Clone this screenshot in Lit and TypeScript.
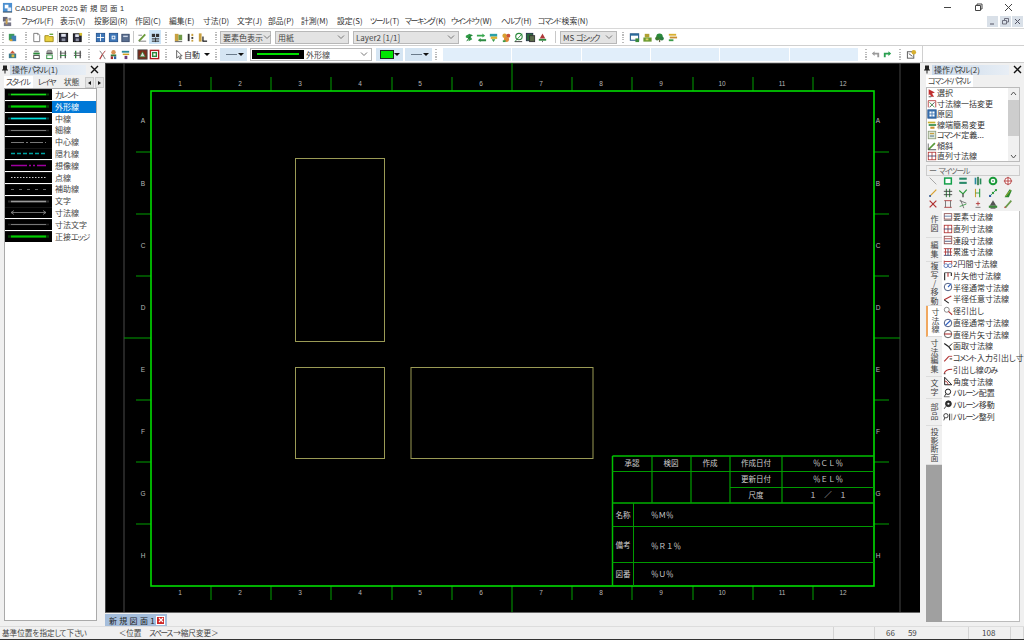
import { LitElement, html, css, svg, nothing } from "lit";
import { customElement } from "lit/decorators.js";

const L = (a: number, b: number, c: number, d: number, col = "#333", w = 1) =>
  svg`<line x1=${a} y1=${b} x2=${c} y2=${d} stroke=${col} stroke-width=${w} />`;
const R = (x: number, y: number, w: number, h: number, f = "none", s = "none", sw = 1) =>
  svg`<rect x=${x} y=${y} width=${w} height=${h} fill=${f} stroke=${s} stroke-width=${sw} />`;
const C = (x: number, y: number, r: number, f = "none", s = "none", sw = 1) =>
  svg`<circle cx=${x} cy=${y} r=${r} fill=${f} stroke=${s} stroke-width=${sw} />`;
const P = (d: string, f = "none", s = "none", sw = 1) =>
  svg`<path d=${d} fill=${f} stroke=${s} stroke-width=${sw} />`;

const K = (s: string) =>
  s.split(/([ぁ-んァ-ヶー]+)/).map((p, i) => (i % 2 ? html`<span class="k">${p}</span>` : p));

const RED = "#b03030", NAVY = "#30406a", GRN = "#2a9a3a", BLK = "#222";

const I: Record<string, unknown[]> = {
  logo: [R(1, 1, 10, 10, "#4b8fd0"), R(3, 3, 4, 4, "#fff"), R(6, 6, 4, 4, "#e8eef8"), L(1, 11, 11, 11, "#345")],
  menu: [R(1, 1, 5, 5, "#667"), R(7, 2, 3, 3, "#99a"), R(2, 7, 8, 4, "#778"), R(4, 3, 2, 6, "#c8a050")],
  book: [R(2, 2, 6, 7, "#3f9a5c"), R(5, 4, 5, 6, "#3f7fb5"), R(3, 8, 3, 2, "#d8a030")],
  new: [P("M3 1.5H7.5L9.5 3.5V10.5H3Z", "#fff", "#777"), L(7.5, 1.5, 7.5, 3.5, "#777")],
  open: [P("M1 4H5L6 5H10V10.5H1Z", "#e8d040", "#a08a18"), L(6, 2.5, 10, 2.5, "#5aa030", 1.4)],
  save: [R(1.5, 1.5, 9, 9, "#2a2a3c", "#111"), R(3.5, 2, 5, 3.2, "#dfe3ee"), R(4, 7, 4, 3, "#8a8fa0")],
  saveas: [R(1.5, 2, 8.5, 8.5, "#2a2a3c", "#111"), R(3.5, 2.5, 4, 3, "#dfe3ee"), R(4, 7, 3.5, 3, "#8a8fa0"), R(8, 1, 3, 3, "#d8c030")],
  win1: [R(1.5, 1.5, 9, 9, "#3d76b8", "#28558f"), L(2, 6, 10, 6, "#fff"), L(6, 2, 6, 10, "#fff")],
  win2: [R(1.5, 1.5, 9, 9, "#3d76b8", "#28558f"), R(4, 4, 4, 4, "#fff"), R(5, 5, 2, 2, "#3d76b8")],
  win3: [R(2, 2.5, 8, 8, "#5a6f90", "#3a4c6c"), R(3.5, 4, 5, 1.5, "#cdd6e6")],
  pen: [L(2, 10, 9, 2.5, "#6a9a3a", 2), R(1.5, 3, 4, 1, "#888"), R(2, 9.5, 8, 1, "#777")],
  grid: [R(2, 2, 3.5, 3.5, "#333"), R(6.5, 2, 3.5, 3.5, "#333"), L(2, 7.5, 10, 7.5, "#333", 1.2), L(2, 10, 10, 10, "#333", 1.2), L(6, 6, 6, 11, "#333")],
  dual: [R(2, 2, 4, 8, "#c8a040"), R(6, 3, 4, 6, "#6e9a48"), L(2, 10.5, 10, 10.5, "#555")],
  dots: [R(3, 2, 2, 8, "#333"), R(7, 2, 2, 2.5, "#c8a040"), R(7, 5.5, 2, 2, "#333"), R(7, 8.5, 2, 2, "#c8a040")],
  lshape: [R(2, 1.5, 3, 9, "#c8a040"), L(6, 10, 11, 10, BLK, 1.4), L(6.5, 5, 6.5, 10, BLK, 1.4)],
  g1: [P("M2 4L6 2L10 4L7 5L9 8L5 10V7L2 6Z", "#2e9a45"), L(3, 10, 8, 3, "#196b2c")],
  g2: [P("M1 3H7V1.5L10 4L7 6V5H1Z", "#3aa850"), P("M11 8H5V6.5L2 9L5 11V10H11Z", "#2d8a42")],
  g3: [R(2, 2, 8, 3, "#2aa0a8"), R(3, 5, 7, 2.5, "#d8b030"), P("M4 8H8L6 11Z", "#3a9a48")],
  g4: [C(4, 4, 2.5, "#d8a030"), C(8, 4, 2.2, "#c8503a"), C(6, 8, 2.8, "#e08838"), R(2, 9, 3, 2, "#3a9a48")],
  g5: [C(6.5, 5, 3.5, "#fff", "#2a8a3a", 1.2), L(2, 10.5, 10, 2, "#2a8a3a"), L(2, 10.5, 10, 10.5, "#333")],
  g6: [R(1.5, 1.5, 7, 8, "#2a6a3a", "#234"), R(5, 4, 5.5, 6.5, "#5a6a48", "#333")],
  g7: [P("M6 1.5L9 7H3Z", "#b03838"), R(2, 7.5, 8, 2, "#2a8a3a"), L(6, 9.5, 6, 11, "#555")],
  g8: [R(1.5, 2, 9, 7, "#fff", "#2a5a8a", 1.2), R(1.5, 2, 9, 2, "#2a6a9a"), R(7, 7, 4, 4, "#3a8a3a")],
  g9: [R(3, 2, 5, 4, "#b0a030"), R(1.5, 6, 9, 4.5, "#6a9a30"), R(4, 7, 3, 2, "#d8d060")],
  g10: [C(6, 5, 3.5, "#2a8a3a"), C(3.5, 7, 2.2, "#3a7a30"), C(8.5, 7, 2.2, "#2a7a40"), R(5.4, 8, 1.4, 3, "#664")],
  g11: [R(2, 2, 8, 2, "#d8b030"), R(3, 5, 8, 2, "#c89030"), R(2, 8, 5, 2, "#3a9a48")],
  cube: [R(2, 5, 8, 5, "#3a7a8c"), P("M3 5L6 1.5L9 5Z", "#c85a3a"), R(5, 6, 3, 3, "#d8c040")],
  vb1: [P("M3 3.5L4 1.5H8L9 3.5Z", "#888"), R(2.5, 4, 7, 2, "#2a8a3a"), R(3, 7, 6, 3.5, "#fff", "#444")],
  vb2: [P("M3 3.5L4 1.5H8L9 3.5Z", "#bbb", "#555", 0.6), R(2.5, 4, 7, 1.5, "#555"), R(3, 6.5, 6, 4, "#fff", "#2a8a3a")],
  vb3: [L(3, 2, 3, 10, "#555", 1.4), L(8, 2, 8, 10, "#555", 1.4), L(2, 4.5, 9, 4.5, "#555"), L(2, 7, 9, 7, "#2a8a3a")],
  vb4: [L(4, 2, 4, 10, "#2a8a3a", 1.4), L(9, 2, 9, 10, "#555", 1.4), L(2, 4.5, 10, 4.5, "#555"), L(2, 7, 10, 7, "#555")],
  cross: [L(3, 2, 7, 7, "#777"), L(9, 2, 5, 7, "#b04040"), L(6, 6, 3, 11, "#b04040", 1.3), L(6, 6, 9, 11, "#777")],
  person: [C(6, 3.5, 2.4, "#d89050"), R(3, 6, 6, 2, "#3a7a3a"), R(3, 8, 2.5, 3, "#a03030"), R(6.5, 8, 2.5, 3, "#3060a0")],
  stack: [R(2, 2, 8, 2, "#2a8a9a"), R(3, 5, 7, 1.6, "#d0a020"), R(5, 7.5, 3, 3.5, "#6a3a7a")],
  redbox1: [R(1, 1, 10, 10, "#7c2b1b", "#444"), P("M6 3L9 8.5H3Z", "#ddd", "#2a8a3a", 0.8)],
  redbox2: [R(1.5, 1.5, 9, 9, "#fff", "#b02020", 1.5), R(4, 4, 4, 4, "#fff", "#2a8a3a", 1.5)],
  cursor: [P("M4 1.5V10L6 8L7.5 11L9 10.4L7.5 7.5H10Z", "#fff", "#444", 0.9)],
  undo: [P("M2 5L5 2.5V4H10V9H8V6H5V7.5Z", "#9a9a9a")],
  redo: [P("M10 5L7 2.5V4H2V9H4V6H7V7.5Z", "#2aa050")],
  hint: [R(1.5, 3, 7, 7, "#fff", "#555"), L(3, 5, 7, 8, "#555"), C(8.5, 3.5, 2.5, "#d8b030")],
  select: [P("M2 1.5L9.5 5.5L6 6.5L8.5 10.5H5L3.5 7.5L2 9Z", "#c03030"), L(2, 10.5, 5, 10.5, "#333")],
  dimbulk: [L(1.5, 2, 10.5, 2, RED), L(1.5, 2, 1.5, 10, RED), L(10.5, 2, 10.5, 10, RED), L(3, 10, 9, 4, "#333"), L(3, 4, 9, 10, GRN)],
  orig: [R(1, 1, 10, 10, "#3a72b0", "#28558f"), R(3, 3, 6, 6, "#fff"), L(1, 6, 11, 6, "#3a72b0"), L(6, 1, 6, 11, "#3a72b0")],
  lineend: [R(1, 2, 9, 2, "#c8b030"), R(2, 5, 9, 2, "#2a8a4a"), R(4, 8, 5, 2.5, "#c89030")],
  cmddef: [R(1.5, 1.5, 9, 9, "#dfe8d8", "#8a9a78"), R(3.5, 3.5, 5, 1.5, "#c8a040"), R(3.5, 6.5, 5, 1.5, "#6a8aa0")],
  slant: [L(1.5, 10.5, 9.5, 2.5, "#5a9a3a", 2), L(1.5, 10.5, 11, 10.5, "#333"), L(1.5, 3, 1.5, 10.5, "#555")],
  dA: [R(1.5, 2, 9, 6.5, "none", "#8a4a4a"), L(1.5, 5, 10.5, 5, "#4a6a9a"), L(1, 10, 11, 10, "#555")],
  dB: [R(1.5, 1.5, 9, 9, "none", RED), L(6, 1.5, 6, 10.5, RED), L(1, 6, 11, 6, NAVY)],
  dC: [R(1.5, 1.5, 9, 9, "none", "#8a4a4a"), L(2, 4.5, 10, 4.5, RED), L(2, 7.5, 10, 7.5, NAVY)],
  dD: [L(1, 2, 11, 2, RED), L(1, 6, 11, 6, RED), L(1, 10, 11, 10, NAVY), L(3, 2, 3, 10, RED), L(6, 2, 6, 10, NAVY), L(9, 2, 9, 10, RED)],
  dE: [C(3.5, 8, 2.3, "none", "#4a6ab0"), C(8.5, 8, 2.3, "none", "#4a6ab0"), L(1.5, 3, 10.5, 3, RED), L(1.5, 2, 1.5, 6, RED), L(10.5, 2, 10.5, 6, RED)],
  dF: [L(2, 2, 2, 11, BLK, 1.3), L(2, 2, 10, 2, "#555"), L(6, 2, 6, 7, RED, 1.3), L(10, 2, 10, 6, BLK, 1.3)],
  dG: [C(6, 6, 4.5, "#fff", NAVY), L(6, 6, 10, 2, "#3060c0", 1.3)],
  dH: [L(1.5, 7, 10, 2.5, RED, 1.3), L(1.5, 7, 7, 11, BLK, 1.3)],
  dI: [C(4.5, 4.5, 3, "#fff", "#777"), L(6.5, 6.5, 11, 10.5, RED, 1.3)],
  dJ: [C(6, 6, 4.5, "#fff", NAVY), L(2.8, 9, 9, 3, "#3060c0", 1.3)],
  dK: [C(6, 6, 4.5, "#fff", "#444"), L(1.5, 6, 10.5, 6, RED, 1.3)],
  dL: [L(1.5, 3, 7, 7, BLK, 1.5), L(7, 7, 10, 11, BLK, 1.5), L(7, 7, 11, 3, BLK, 1.2)],
  dM: [L(1.5, 10, 7, 4, RED, 1.3), L(7, 4, 11, 4, RED), R(8, 6, 3, 2, "#888")],
  dN: [P("M1.5 10.5C2 7 5 5 11 5", "none", RED, 1.3), L(1, 10.5, 3, 10.5, "#333")],
  dO: [P("M2 1.5L10.5 10.5H2Z", "none", BLK, 1.2), P("M2 6Q5.5 6 6.5 10.5", "none", RED)],
  bA: [C(6, 4.5, 3.2, "#fff", BLK, 1.2), L(3.5, 7, 1.5, 10.5, BLK), L(1.5, 10.5, 8, 10.5, "#555")],
  bB: [C(6.5, 4.5, 3.5, "#333", BLK), C(6.5, 4.5, 1.3, "#fff"), L(3.5, 7.5, 1.5, 10.5, BLK)],
  bC: [C(3.5, 4.5, 2.6, "#fff", BLK), L(2, 7, 1, 10, BLK), L(8, 2, 8, 10, BLK, 1.2), L(10.5, 2, 10.5, 10, "#888")],
  t1: [L(2, 2, 10, 10, "#999")],
  t2: [R(2, 2.5, 8, 7, "#fff", "#14a04a", 1.8)],
  t3: [R(1.5, 2, 9, 2.5, "#2a8a6a"), R(1.5, 7, 9, 2.5, "#2a8a6a")],
  t4: [R(2, 2, 2, 8, "#2a8aa0"), R(5, 1, 2, 10, "#2a7a4a"), R(8, 3, 2, 7, "#2a8a5a")],
  t5: [C(6, 6, 4, "#fff", "#1a9a3a", 2.4), C(6, 6, 1, "#1a6a3a")],
  t6: [C(6, 6, 4, "#fff", RED), L(6, 1, 6, 11, RED), L(1, 6, 11, 6, RED)],
  t7: [L(2, 10, 10, 2, "#d8a030", 1.5), C(2.5, 9.5, 1.2, "#2a5aa0")],
  t8: [L(4, 1, 4, 11, "#2a7a3a", 1.2), L(8, 1, 8, 11, "#2a7a3a", 1.2), L(1, 4, 11, 4, "#333"), L(1, 8, 11, 8, "#333")],
  t9: [L(1.5, 3, 6, 7, GRN, 1.4), L(10.5, 2, 6, 7, GRN, 1.4), L(6, 7, 6, 11, "#333", 1.4)],
  t10: [L(3, 1, 3, 11, "#c8a030", 1.3), L(8, 1, 8, 11, GRN, 1.3), L(3, 6, 8, 6, GRN)],
  t11: [L(2, 10, 10, 2, "#2a8a5a"), C(2.5, 9.5, 1.4, "#2a5aa0"), C(6, 6, 1.4, GRN), C(9.5, 2.5, 1.4, GRN)],
  t12: [P("M3 9L8 1.5L10.5 3L7 11H2Z", "#2a8a30"), L(3, 10, 9, 3, "#c8b030")],
  t13: [L(2, 2, 10, 10, RED, 1.4), L(10, 2, 2, 10, RED, 1.4)],
  t14: [L(1.5, 2, 10.5, 2, RED), L(1.5, 10, 10.5, 10, RED), L(3, 2, 3, 10, "#666"), L(9, 2, 9, 10, "#666")],
  t15: [L(2, 2, 10, 5, "#666"), L(2, 9, 10, 6, GRN), L(3, 1, 7, 11, "#666")],
  t16: [L(6, 3, 6, 8, RED), L(3.5, 5.5, 8.5, 5.5, RED), L(3, 10, 9, 10, "#666")],
  t17: [P("M6 1.5L10 8H2Z", "#555"), R(1, 8, 10, 2.6, "#3a8a3a"), L(3, 11, 9, 11, "#333")],
  t18: [L(3, 10, 10, 2, "#6a9a4a", 2), C(2.5, 10, 1, "#b04030")],
};

const ico = (n: string, size = 11) =>
  html`<svg class="ico" width=${size} height=${size} viewBox="0 0 12 12">${I[n]}</svg>`;

const chevron = html`<svg class="chev" width="8" height="6" viewBox="0 0 8 6"><path d="M1 1.5L4 4.5L7 1.5" fill="none" stroke="#777" stroke-width="1" /></svg>`;
const caret = html`<span class="caret"></span>`;

type Item = { x: number; w: number; t: unknown };
const icon = (c: number, n: string, cls = ""): Item => ({ x: c - 6.25, w: 12.5, t: html`<span class="ib ${cls}">${ico(n)}</span>` });
const dot = (x: number): Item => ({ x: x - 1, w: 2, t: html`<span class="dotsep"></span>` });
const thin = (x: number): Item => ({ x, w: 1, t: html`<span class="thinsep"></span>` });
const combo = (x: number, e: number, text: string): Item => ({ x, w: e - x, t: html`<span class="combo"><span class="ct">${K(text)}</span>${chevron}</span>` });

const row1: Item[] = [
  dot(3), icon(12.5, "book"), dot(26), icon(36, "new"), icon(49, "open"), thin(56.5), icon(63, "save"), icon(77, "saveas"), dot(89),
  icon(100, "win1"), icon(113, "win2"), icon(125, "win3"), thin(133), icon(142, "pen"), icon(155, "grid", "on"), dot(166),
  icon(178, "dual"), icon(190, "dots"), icon(202, "lshape"), dot(216),
  combo(220, 271, "要素色表示"), combo(275, 349, "用紙"), combo(353, 459, "Layer2 [1/1]"),
  icon(469, "g1"), icon(481, "g2"), icon(493, "g3"), icon(506, "g4"), icon(518, "g5"), icon(530, "g6"), icon(542, "g7"), thin(555),
  combo(560, 617, "MS ゴシック"), dot(623), icon(634, "g8"), icon(647, "g9"), icon(659, "g10"), icon(672, "g11"),
];

const row2: Item[] = [
  dot(3), icon(12.5, "cube"), dot(26), icon(36, "vb1"), icon(49, "vb2"), thin(56.5), icon(63, "vb3"), icon(77, "vb4"), dot(89),
  icon(102, "cross"), icon(113, "person"), icon(125, "stack"), thin(133), icon(142, "redbox1"), icon(154, "redbox2"), dot(166),
  icon(178, "cursor"),
  { x: 184, w: 28, t: html`<span class="auto">自動${caret}</span>` }, dot(216),
  { x: 220, w: 27, t: html`<span class="pick"><span class="dash"></span>${caret}</span>` },
  { x: 250, w: 122, t: html`<span class="linecombo"><span class="prev"><i></i></span><span class="ct">外形線</span>${chevron}</span>` },
  { x: 376, w: 27, t: html`<span class="pick"><span class="swatch"></span>${caret}</span>` },
  { x: 405, w: 27, t: html`<span class="pick"><span class="dash"></span>${caret}</span>` }, dot(436),
  { x: 443, w: 415, t: html`<span class="strip">${[0, 1, 2, 3, 4, 5].map(() => html`<i></i>`)}</span>` }, dot(866),
  icon(875, "undo"), icon(887, "redo"), dot(900), icon(911, "hint"),
];

const renderRow = (items: Item[]) => {
  let end = 0;
  return items.map((it) => {
    const m = it.x - end;
    end = it.x + it.w;
    return html`<span class="cell" style="margin-left:${m}px;width:${it.w}px">${it.t}</span>`;
  });
};

const menus = [
  ["ファイル(F)", 21], ["表示(V)", 60], ["投影図(R)", 94], ["作図(C)", 135], ["編集(E)", 169], ["寸法(D)", 203], ["文字(J)", 237],
  ["部品(P)", 268], ["計測(M)", 301], ["設定(S)", 337], ["ツール(T)", 370], ["マーキング(K)", 405], ["ウインドウ(W)", 451],
  ["ヘルプ(H)", 501], ["コマンド検索(N)", 538],
] as [string, number][];

type St = { n: string; c: string; w: number; d?: string; a?: boolean };
const styles: St[] = [
  { n: "カレント", c: "#18e018", w: 1.4 },
  { n: "外形線", c: "#00d800", w: 2 },
  { n: "中線", c: "#00e0e0", w: 1.4 },
  { n: "細線", c: "#777", w: 1 },
  { n: "中心線", c: "#777", w: 1, d: "13 2 2 2" },
  { n: "隠れ線", c: "#00a0a0", w: 1.3, d: "4 2" },
  { n: "想像線", c: "#a000a0", w: 1.4, d: "16 2 2 2 2 2" },
  { n: "点線", c: "#ccc", w: 1, d: "1.5 1.5" },
  { n: "補助線", c: "#666", w: 1, d: "3 5" },
  { n: "文字", c: "#999", w: 1.6 },
  { n: "寸法線", c: "#8a8a8a", w: 0.8, a: true },
  { n: "寸法文字", c: "#777", w: 1 },
  { n: "正接エッジ", c: "#00cc00", w: 2 },
];

const cmds: [string, string][] = [
  ["select", "選択"], ["dimbulk", "寸法線一括変更"], ["orig", "原図"], ["lineend", "線端簡易変更"], ["cmddef", "コマンド定義..."], ["slant", "傾斜"], ["dB", "直列寸法線"],
];
const tools = ["t1", "t2", "t3", "t4", "t5", "t6", "t7", "t8", "t9", "t10", "t11", "t12", "t13", "t14", "t15", "t16", "t17", "t18"];
const dims: [string, string][] = [
  ["dA", "要素寸法線"], ["dB", "直列寸法線"], ["dC", "連段寸法線"], ["dD", "累進寸法線"], ["dE", "2円間寸法線"], ["dF", "片矢他寸法線"],
  ["dG", "半径通常寸法線"], ["dH", "半径任意寸法線"], ["dI", "径引出し"], ["dJ", "直径通常寸法線"], ["dK", "直径片矢寸法線"], ["dL", "面取寸法線"],
  ["dM", "コメント入力引出し寸"], ["dN", "引出し線のみ"], ["dO", "角度寸法線"], ["bA", "バルーン配置"], ["bB", "バルーン移動"], ["bC", "バルーン整列"],
];
const vtabs: [string, number, boolean][] = [
  ["作図", 27, false], ["編集", 24, false], ["複写/移動", 44, false], ["寸法線", 31, true], ["寸法編集", 40, false], ["文字", 22, false], ["部品", 27, false], ["投影断面", 39, false],
];

const pin = html`<svg class="pin" width="8" height="9" viewBox="0 0 8 9"><path d="M2 0.5H6V4.5H7V5.5H4.5V8.5H3.5V5.5H1V4.5H2Z" fill="#222" /></svg>`;
const xBtn = html`<svg class="x" width="9" height="9" viewBox="0 0 9 9"><path d="M1 1L8 8M8 1L1 8" stroke="#111" stroke-width="1.4" /></svg>`;

const xTicks = [211, 271, 331, 392, 452, 572, 632, 693, 753, 813];
const yTicks = [152, 214, 276, 400, 462, 524];
const nums = [180, 240, 300, 360, 420, 481, 541, 601, 661, 722, 782, 843];
const letters: [string, number][] = [["A", 120], ["B", 183], ["C", 245], ["D", 307], ["E", 369], ["F", 431], ["G", 493], ["H", 555]];
const blockText: [string, number, number, string?][] = [
  ["承認", 632, 463], ["検図", 671, 463], ["作成", 710, 463], ["作成日付", 756, 463], ["％ＣＬ％", 828, 463],
  ["更新日付", 756, 479], ["％ＥＬ％", 828, 479], ["尺度", 756, 495], ["１　／　１", 828, 495],
  ["名称", 623, 515], ["備考", 623, 545], ["図番", 623, 574],
  ["％Ｍ％", 651, 515, "s"], ["％Ｒ１％", 651, 546, "s"], ["％Ｕ％", 651, 574, "s"],
];

const TICK = "#00a000";
const drawing = html`<svg class="draw" width="815" height="550" viewBox="105 63 815 550">
  ${L(105, 63.5, 920, 63.5, "#333")}
  ${L(105.5, 63, 105.5, 613, "#444")}
  ${L(124, 63, 124, 613, "#4a4a4a")}
  ${L(900, 63, 900, 613, "#444")}
  ${L(105, 612.5, 920, 612.5, "#666")}
  ${xTicks.map((x) => svg`${L(x, 77, x, 91, TICK)}${L(x, 586, x, 600, TICK)}`)}
  ${yTicks.map((y) => svg`${L(136, y, 151, y, TICK)}${L(874, y, 889, y, TICK)}`)}
  ${L(512, 63, 512, 91, TICK)}${L(512, 586, 512, 612, TICK)}
  ${L(124, 338, 151, 338, TICK)}${L(874, 338, 900, 338, TICK)}
  ${R(151, 91, 723, 495, "none", "#00dc00", 1.6)}
  ${R(295.5, 158.5, 89, 183, "none", "#9a9a55")}
  ${R(295.5, 367.5, 89, 91, "none", "#9a9a55")}
  ${R(411, 367.5, 182, 91, "none", "#9a9a55")}
  ${L(612.5, 456, 874, 456, "#00c000", 1.5)}
  ${L(612.5, 456, 612.5, 586, "#00c000", 1.5)}
  ${L(612.5, 503, 874, 503, "#00b000", 1.5)}
  ${L(612.5, 471.5, 874, 471.5, "#009a00")}
  ${L(730, 487.5, 874, 487.5, "#009a00")}
  ${L(652, 456, 652, 503, "#00a000", 1.2)}${L(691, 456, 691, 503, "#00a000", 1.2)}
  ${L(730, 456, 730, 503, "#00a000", 1.2)}${L(782, 456, 782, 503, "#00a000", 1.2)}
  ${L(633.5, 503, 633.5, 586, "#009a00")}
  ${L(612.5, 526.5, 874, 526.5, "#009a00")}${L(612.5, 562.5, 874, 562.5, "#009a00")}
  ${nums.map((x, i) => svg`<text class="lab" x=${x} y="85.5">${i + 1}</text><text class="lab" x=${x} y="595">${i + 1}</text>`)}
  ${letters.map(([t, y]) => svg`<text class="lab" x="143" y=${y + 2.5}>${t}</text><text class="lab" x="878" y=${y + 2.5}>${t}</text>`)}
  ${blockText.map(([t, x, y, k]) => svg`<text class=${k ? "bt st" : "bt"} x=${x} y=${y + 3}>${t}</text>`)}
</svg>`;

@customElement("app-root")
export class AppRoot extends LitElement {
  static styles = css`
    :host {
      display: flex; flex-direction: column; width: 1024px; height: 640px; overflow: hidden; background: #f0f0f0;
      font-family: "Noto Sans CJK JP", "Liberation Sans", sans-serif; font-size: 8px; color: #333; font-feature-settings: "palt";
    }
    svg { display: block; flex: none; }
    .k { letter-spacing: -1.3px; margin-right: 1.3px; }
    .title { display: flex; align-items: center; height: 14px; background: #fff; flex: none; padding-left: 2px; }
    .title .tt { margin-left: 2px; font: 7.4px "Liberation Sans", "Noto Sans CJK JP", sans-serif; color: #333; letter-spacing: .25px; white-space: pre; }
    .wc { margin-left: auto; display: flex; }
    .wc span { width: 30.5px; height: 14px; display: flex; align-items: center; justify-content: center; }
    .menubar { display: flex; height: 14px; background: #fff; align-items: center; flex: none; padding-left: 2px; }
    .menubar .m { white-space: nowrap; line-height: 14px; color: #333; font-size: 7.8px; }
    .mdi { margin-left: auto; display: flex; gap: 1.5px; padding-right: 1px; }
    .mdi span { width: 11px; height: 11px; background: #d9e0e8; display: flex; align-items: center; justify-content: center; }
    .tb { display: flex; flex: none; height: 16px; background: #fff; align-items: center; }
    .tb1 { border-top: 1px solid #d8d8d8; border-bottom: 1px solid #d0d0d0; }
    .tbwrap { background: #fff; flex: none; }
    .tb2 { width: 922px; border-right: 1px solid #d0d0d0; }
    .bar { height: 1px; background: #ccc; flex: none; }
    .cell { flex: none; display: flex; align-items: center; justify-content: center; height: 14px; }
    .ib { width: 12.5px; height: 14px; display: flex; align-items: center; justify-content: center; }
    .ib.on { background: #cce4f7; }
    .dotsep { width: 1.5px; height: 11px; background: repeating-linear-gradient(#bbb 0 1px, transparent 1px 2.5px); }
    .thinsep { width: 1px; height: 12px; background: #c8c8c8; }
    .combo { width: 100%; height: 13px; box-sizing: border-box; border: 1px solid #b8b8b8; background: #e3e3e3; display: flex; align-items: center; padding: 0 3px 0 2px; justify-content: space-between; }
    .ct { white-space: nowrap; color: #444; }
    .auto { display: flex; align-items: center; gap: 4px; width: 100%; color: #333; white-space: nowrap; }
    .caret { display: inline-block; width: 0; height: 0; border-left: 3px solid transparent; border-right: 3px solid transparent; border-top: 3px solid #111; flex: none; }
    .pick { width: 100%; height: 13px; background: #d5e5f3; display: flex; align-items: center; justify-content: space-between; padding: 0 3px 0 4px; box-sizing: border-box; }
    .dash { width: 11px; height: 1px; background: #6a7a8a; margin-left: 2px; }
    .swatch { width: 14px; height: 9px; background: #00e600; border: 1px solid #222; box-sizing: border-box; }
    .linecombo { width: 100%; height: 13px; box-sizing: border-box; border: 1px solid #b8b8b8; background: #fff; display: flex; align-items: center; padding: 1px 3px 1px 1px; gap: 2px; }
    .linecombo .ct { flex: 1; }
    .prev { width: 52px; height: 100%; background: #000; display: flex; align-items: center; justify-content: center; }
    .prev i { display: block; width: 42px; height: 1.5px; background: #00e000; }
    .strip { width: 100%; height: 13px; display: grid; grid-template-columns: repeat(6, 1fr); gap: 1px; }
    .strip i { background: #e1eefa; }
    .main { flex: 1; display: flex; min-height: 0; }
    .lp { width: 101px; flex: none; display: flex; flex-direction: column; padding: 1px 0 5px 4px; box-sizing: border-box; }
    .cc { width: 815px; margin-left: 4px; flex: none; display: flex; flex-direction: column; }
    .rp { width: 100px; margin-left: 4px; flex: none; display: flex; flex-direction: column; padding: 1px 0 4px 2px; box-sizing: border-box; }
    .rp .tabs { height: 12px; }
    .ph { height: 11px; display: flex; align-items: center; flex: none; margin-left: -3px; gap: 1px; }
    .ph .cap { flex: 1; height: 10px; line-height: 10px; background: linear-gradient(90deg, #c9d9ea, #e8eef5); color: #333; white-space: nowrap; padding-left: 2px; }
    .ph .x { margin: 0 2px 0 3px; }
    .tabs { display: flex; height: 13px; align-items: flex-end; flex: none; }
    .tab { height: 12px; line-height: 12px; padding: 0 2px; white-space: nowrap; color: #444; margin-right: 3px; }
    .tab.act { background: #fff; }
    .arr { margin-left: auto; display: flex; gap: 1px; margin-right: 1px; }
    .arr span { width: 9px; height: 11px; background: #e4e4e4; border: 1px solid #ccc; box-sizing: border-box; display: flex; align-items: center; justify-content: center; }
    .arr b { width: 0; height: 0; border-top: 2.5px solid transparent; border-bottom: 2.5px solid transparent; }
    .arr .l { border-right: 3px solid #111; }
    .arr .r { border-left: 3px solid #111; }
    .listbox { flex: 1; width: 93px; box-sizing: border-box; background: #fff; border: 1px solid #aaa; display: flex; flex-direction: column; }
    .srow { display: flex; height: 11.8px; flex: none; align-items: center; }
    .srow svg { background: #000; }
    .srow .nm { flex: 1; height: 100%; line-height: 11.8px; padding-left: 3px; color: #444; white-space: nowrap; }
    .srow.sel .nm { background: #0078d7; color: #fff; }
    .draw { background: #000; }
    .lab { font-family: "Liberation Sans", sans-serif; font-size: 6.5px; fill: #b8b8b8; text-anchor: middle; }
    .bt { font-family: "Noto Sans CJK JP", sans-serif; font-size: 7.5px; fill: #cfcfcf; text-anchor: middle; font-feature-settings: normal; }
    .bt.st { text-anchor: start; }
    .dtabs { height: 14px; display: flex; flex: none; background: #f0f0f0; }
    .dtab { width: 62px; height: 13.5px; margin-top: .5px; background: #a4bddb; display: flex; align-items: center; justify-content: space-between; padding: 0 2px 0 4px; box-sizing: border-box; color: #222; letter-spacing: .25px; white-space: nowrap; }
    .close { width: 7px; height: 7px; background: #d02828; display: flex; align-items: center; justify-content: center; border: 1px solid #fff; flex: none; }
    .cmdbox { height: 75px; width: 94px; flex: none; box-sizing: border-box; background: #fff; border: 1px solid #bbb; display: flex; }
    .cmdlist { flex: 1; min-width: 0; display: flex; flex-direction: column; }
    .li { display: flex; align-items: center; height: 10.5px; flex: none; white-space: nowrap; overflow: hidden; color: #333; line-height: 10px; }
    .sb { width: 11px; flex: none; background: #f0f0f0; display: flex; flex-direction: column; align-items: center; }
    .sb .th { width: 100%; height: 36px; background: #cdcdcd; margin: 2px 0 auto; }
    .sb .ar { height: 10px; display: flex; align-items: center; justify-content: center; }
    .mytool { height: 11px; width: 94px; flex: none; box-sizing: border-box; margin-top: 3px; background: #f0f0f0; border: 1px solid #ccc; color: #666; line-height: 9px; padding-left: 2px; white-space: nowrap; }
    .tgrid { display: grid; grid-template-columns: repeat(6, 15px); grid-auto-rows: 11.7px; width: 94px; flex: none; justify-items: center; align-items: center; height: 36px; box-sizing: border-box; margin: -1px 0 0 -1px; }
    .lower { flex: 1; width: 94px; display: flex; min-height: 0; }
    .vt { width: 16px; flex: none; display: flex; flex-direction: column; background: #a0a0a0; }
    .v { flex: none; background: #f0f0f0; color: #444; writing-mode: vertical-rl; text-orientation: upright; display: flex; align-items: center; justify-content: center; line-height: 10px; letter-spacing: .7px; box-sizing: border-box; border-bottom: 1px solid #ddd; white-space: nowrap; }
    .v.act { background: #fff; border-left: 2px solid #f0a860; }
    .dimlist { flex: 1; min-width: 0; background: #fff; border: 1px solid #bbb; border-width: 0 1px 1px 0; box-sizing: border-box; display: flex; flex-direction: column; }
    .dimlist .li { height: 11.75px; line-height: 11.75px; padding-left: 1px; overflow: visible; }
    .status { height: 12px; flex: none; border-top: 1px solid #ddd; border-bottom: 1px solid #333; display: grid; grid-template-columns: 834px 41px 94px 42px 13px; box-sizing: content-box; line-height: 11px; color: #444; background: #f0f0f0; }
    .status > div { border-right: 1px solid #d4d4d4; display: flex; white-space: nowrap; box-sizing: border-box; }
    .s1 { padding-left: 2px; font-size: 7.6px; }
    .s1 .hint { margin-left: 32px; }
    .s3 { padding-left: 11px; gap: 13px; }
    .s4 { padding-left: 13px; }
  `;

  private lineSwatch(s: St) {
    return svg`<svg width="47" height="11" viewBox="0 0 47 11">
      ${L(0, 0.2, 47, 0.2, "#3c3c3c", 0.5)}
      ${s.a
        ? svg`${L(6, 5.5, 41, 5.5, s.c, s.w)}<path d="M9 3.5L6 5.5L9 7.5M38 3.5L41 5.5L38 7.5" fill="none" stroke=${s.c} stroke-width="0.8" />`
        : svg`${s.d ? nothing : svg`<line x1="3" y1="5.5" x2="44" y2="5.5" stroke=${s.c} stroke-width=${s.w + 0.6} opacity="0.3" />`}
            <line x1="6" y1="5.5" x2="41" y2="5.5" stroke=${s.c} stroke-width=${s.w} stroke-dasharray=${s.d ?? nothing} />`}
    </svg>`;
  }

  render() {
    return html`
      <div class="title">
        ${ico("logo", 11)}
        <span class="tt">CADSUPER 2025 新 規 図 面 1</span>
        <div class="wc">
          <span><svg width="9" height="9" viewBox="0 0 9 9"><path d="M1 4.5H8" stroke="#444" /></svg></span>
          <span><svg width="9" height="9" viewBox="0 0 9 9"><path d="M1.5 2.5H6.5V7.5H1.5ZM3 2.5V1H8V6H6.5" fill="none" stroke="#444" /></svg></span>
          <span><svg width="9" height="9" viewBox="0 0 9 9"><path d="M1 1L8 8M8 1L1 8" stroke="#444" /></svg></span>
        </div>
      </div>
      <div class="menubar">
        ${ico("menu", 11)}
        ${menus.map(([t, x], i) => {
          const ml = i === 0 ? x - 13 : 0;
          const w = i + 1 < menus.length ? menus[i + 1][1] - x : 60;
          return html`<span class="m" style="margin-left:${ml}px;width:${w}px">${K(t)}</span>`;
        })}
        <div class="mdi">
          <span><svg width="7" height="7" viewBox="0 0 7 7"><path d="M1 6H5" stroke="#556" /></svg></span>
          <span><svg width="7" height="7" viewBox="0 0 7 7"><path d="M.5 2.5H4.5V6H.5ZM2.5 2V.5H6.5V4H5" fill="none" stroke="#556" stroke-width=".8" /></svg></span>
          <span><svg width="7" height="7" viewBox="0 0 7 7"><path d="M1 1L6 6M6 1L1 6" stroke="#556" /></svg></span>
        </div>
      </div>
      <div class="tbwrap">
        <div class="tb tb1">${renderRow(row1)}</div>
        <div class="tb tb2">${renderRow(row2)}</div>
      </div>
      <div class="bar"></div>
      <div class="main">
        <aside class="lp">
          <div class="ph">${pin}<span class="cap">${K("操作パネル(1)")}</span>${xBtn}</div>
          <div class="tabs">
            <span class="tab act">${K("スタイル")}</span><span class="tab">${K("レイヤ")}</span><span class="tab">状態</span>
            <span class="arr"><span><b class="l"></b></span><span><b class="r"></b></span></span>
          </div>
          <div class="listbox">
            ${styles.map((s, i) => html`<div class="srow ${i === 1 ? "sel" : ""}">${this.lineSwatch(s)}<span class="nm">${K(s.n)}</span></div>`)}
          </div>
        </aside>
        <section class="cc">
          ${drawing}
          <div class="dtabs">
            <div class="dtab"><span>新 規 図 面 1</span>
              <span class="close"><svg width="6" height="6" viewBox="0 0 6 6"><path d="M1 1L5 5M5 1L1 5" stroke="#fff" stroke-width="1.2" /></svg></span>
            </div>
          </div>
        </section>
        <aside class="rp">
          <div class="ph">${pin}<span class="cap">${K("操作パネル(2)")}</span>${xBtn}</div>
          <div class="tabs"><span class="tab act">${K("コマンドパネル")}</span></div>
          <div class="cmdbox">
            <div class="cmdlist">${cmds.map(([n, t]) => html`<div class="li">${ico(n, 10)}<span>${K(t)}</span></div>`)}</div>
            <div class="sb">
              <span class="ar"><svg width="7" height="5" viewBox="0 0 7 5"><path d="M1 4L3.5 1L6 4" fill="none" stroke="#555" /></svg></span>
              <span class="th"></span>
              <span class="ar"><svg width="7" height="5" viewBox="0 0 7 5"><path d="M1 1L3.5 4L6 1" fill="none" stroke="#555" /></svg></span>
            </div>
          </div>
          <div class="mytool">${K("ー マイツール")}</div>
          <div class="tgrid">${tools.map((t) => ico(t, 10))}</div>
          <div class="lower">
            <div class="vt">
              ${vtabs.map(([t, h, a]) => html`<div class="v ${a ? "act" : ""}" style="height:${h}px">${t}</div>`)}
            </div>
            <div class="dimlist">${dims.map(([n, t]) => html`<div class="li">${ico(n, 10)}<span>${K(t)}</span></div>`)}</div>
          </div>
        </aside>
      </div>
      <footer class="status">
        <div class="s1"><span>${K("基準位置を指定して下さい")}</span><span class="hint">${K("＜位置　スペース→縮尺変更＞")}</span></div>
        <div></div>
        <div class="s3"><span>66</span><span>59</span></div>
        <div class="s4"><span>108</span></div>
        <div></div>
      </footer>
    `;
  }
}
